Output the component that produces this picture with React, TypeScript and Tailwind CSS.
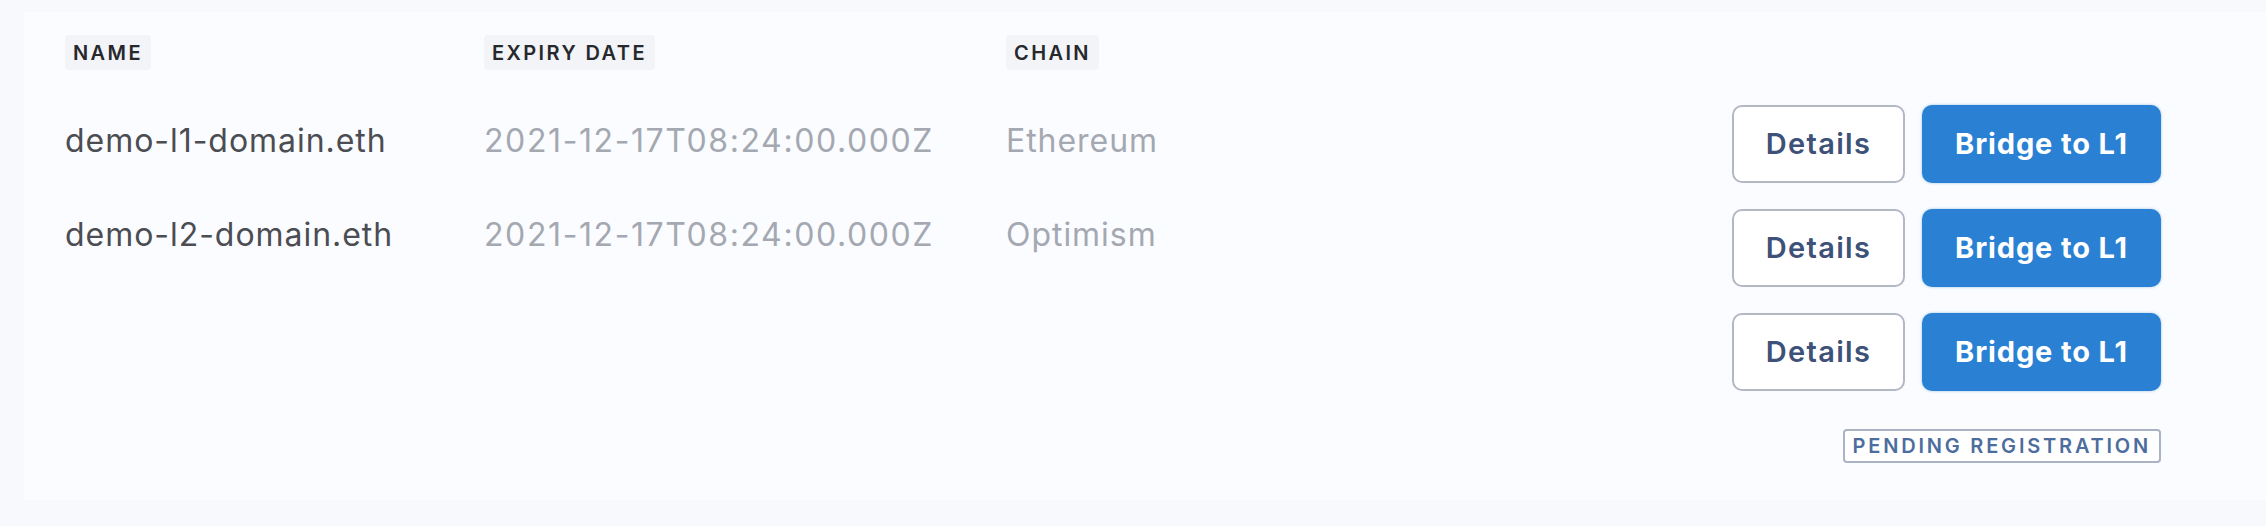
import React from "react";

const rows = [
  { name: "demo-l1-domain.eth", expiry: "2021-12-17T08:24:00.000Z", chain: "Ethereum" },
  { name: "demo-l2-domain.eth", expiry: "2021-12-17T08:24:00.000Z", chain: "Optimism" },
];

function HeaderChip({ children }: { children: React.ReactNode }) {
  return (
    <span className="inline-flex h-[35px] items-center rounded-[4px] bg-[#f2f4f8] px-[8px] text-[20px] font-semibold uppercase tracking-[0.12em] text-[#26282c]">
      {children}
    </span>
  );
}

export default function App() {
  return (
    <div
      className="h-[526px] w-full bg-[#f7f9fd] pl-[24px] pt-[12px]"
      style={{ fontFamily: "Inter, 'Noto Sans', sans-serif" }}
    >
      <div className="flex h-[488px] w-full bg-[#fbfcff] pl-[41px] pr-[105px]">
        {/* table */}
        <div className="flex-1 pt-[23px]">
          <div className="grid grid-cols-[419px_522px_1fr]">
            <div><HeaderChip>Name</HeaderChip></div>
            <div><HeaderChip>Expiry Date</HeaderChip></div>
            <div><HeaderChip>Chain</HeaderChip></div>
          </div>
          <div className="mt-[24px] flex flex-col">
            {rows.map((r) => (
              <div key={r.name} className="grid h-[94px] grid-cols-[419px_522px_1fr] items-center text-[32px]">
                <div className="tracking-[0.03em] text-[#4b4d52]">{r.name}</div>
                <div className="tracking-[0.05em] text-[#a4a8b1]">{r.expiry}</div>
                <div className="tracking-[0.03em] text-[#a4a8b1]">{r.chain}</div>
              </div>
            ))}
          </div>
        </div>
        {/* actions */}
        <div className="flex flex-col items-end pt-[93px]">
          <div className="flex flex-col gap-[26px]">
            {[0, 1, 2].map((i) => (
              <div key={i} className="flex gap-[17px]">
                <button className="h-[78px] w-[173px] rounded-[10px] border-2 border-[#b2b8c4] bg-white text-[29px] font-semibold tracking-[0.045em] text-[#3d5179]">
                  Details
                </button>
                <button className="h-[78px] w-[239px] rounded-[10px] bg-[#2a80d3] text-[29px] font-bold tracking-[0.03em] text-white shadow-[0_0_3px_rgba(42,128,211,0.45)]">
                  Bridge to L1
                </button>
              </div>
            ))}
          </div>
          <div className="mt-[38px] flex h-[34px] items-center rounded-[4px] border-2 border-[#a9b3c4] bg-white px-[8px] text-[20px] font-semibold uppercase tracking-[0.14em] text-[#4c6d9d]">
            Pending Registration
          </div>
        </div>
      </div>
    </div>
  );
}
